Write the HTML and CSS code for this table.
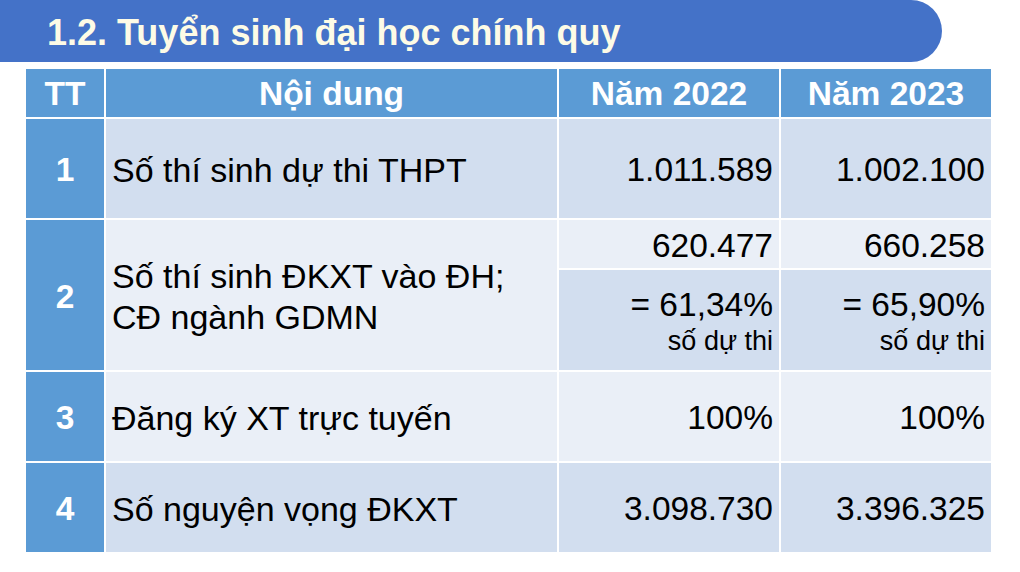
FILE: index.html
```html
<!DOCTYPE html>
<html lang="vi">
<head>
<meta charset="utf-8">
<link rel="stylesheet" href="styles.css">
</head>
<body>
<div class="title-bar"><h1 class="title">1.2. Tuyển sinh đại học chính quy</h1></div>
<div class="table">
  <div class="hd">TT</div>
  <div class="hd">Nội dung</div>
  <div class="hd">Năm 2022</div>
  <div class="hd">Năm 2023</div>

  <div class="tt r1">1</div>
  <div class="txt dark r1">Số thí sinh dự thi THPT</div>
  <div class="num dark r1">1.011.589</div>
  <div class="num dark r1">1.002.100</div>

  <div class="tt r2">2</div>
  <div class="txt light r2">Số thí sinh ĐKXT vào ĐH;<br>CĐ ngành GDMN</div>
  <div class="num light r2a">620.477</div>
  <div class="num light r2a">660.258</div>
  <div class="num2 dark r2b"><span>= 61,34%</span><span class="small">số dự thi</span></div>
  <div class="num2 dark r2b"><span>= 65,90%</span><span class="small">số dự thi</span></div>

  <div class="tt r3">3</div>
  <div class="txt light r3">Đăng ký XT trực tuyến</div>
  <div class="num light r3">100%</div>
  <div class="num light r3">100%</div>

  <div class="tt r4">4</div>
  <div class="txt dark r4">Số nguyện vọng ĐKXT</div>
  <div class="num dark r4">3.098.730</div>
  <div class="num dark r4">3.396.325</div>
</div>
</body>
</html>
```
FILE: styles.css
```css
html, body {
  margin: 0;
  padding: 0;
  background: #ffffff;
  font-family: "Liberation Sans", Arial, sans-serif;
}
.title-bar {
  width: 942px;
  height: 62px;
  background: #4472c8;
  border-radius: 0 31px 31px 0;
  display: flex;
  align-items: center;
  padding-left: 47px;
  padding-top: 4px;
  box-sizing: border-box;
}
.title {
  margin: 0;
  font-size: 36px;
  font-weight: bold;
  color: #fdfbe6;
  line-height: 1;
}
.table {
  margin: 7px 0 0 26px;
  width: 965px;
  display: grid;
  grid-template-columns: 78px 451px 220px 210px;
  grid-template-rows: 48px 99px 48px 100px 89px 89px;
  gap: 2px;
  background: #ffffff;
  font-size: 33.5px;
  color: #000;
}
.hd {
  background: #5b9bd5;
  color: #fff;
  font-weight: bold;
  display: flex;
  align-items: center;
  justify-content: center;
  padding-top: 2px;
}
.tt {
  background: #5b9bd5;
  color: #fff;
  font-weight: bold;
  display: flex;
  align-items: center;
  justify-content: center;
  padding-top: 3px;
}
.dark { background: #d2deef; }
.light { background: #eaeff7; }
.txt {
  display: flex;
  align-items: center;
  padding-left: 6px;
  padding-top: 3px;
  line-height: 41px;
  font-size: 34px;
}
.num {
  display: flex;
  align-items: center;
  justify-content: flex-end;
  padding-right: 6px;
  padding-top: 3px;
}
.num2 {
  display: flex;
  flex-direction: column;
  align-items: flex-end;
  justify-content: center;
  padding-right: 6px;
  padding-top: 3px;
  line-height: 38px;
}
.small { font-size: 27px; line-height: 34px; }
.r1 { grid-row: 2; }
.tt.r2, .txt.r2 { grid-row: 3 / span 2; }
.r2a { grid-row: 3; }
.r2b { grid-row: 4; }
.r3 { grid-row: 5; }
.r4 { grid-row: 6; }
```
